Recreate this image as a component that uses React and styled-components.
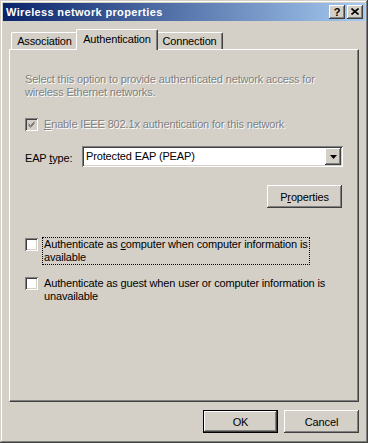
import React from "react";
import styled, { createGlobalStyle, css } from "styled-components";

const face = "#d4d0c8";
const shade = "#808080";
const dark = "#404040";

const raised = css`
  box-shadow: inset -1px -1px ${dark}, inset 1px 1px #fff, inset -2px -2px ${shade},
    inset 2px 2px ${face};
`;
const sunken = css`
  box-shadow: inset 1px 1px ${shade}, inset -1px -1px #fff, inset 2px 2px ${dark},
    inset -2px -2px ${face};
`;

const GlobalStyle = createGlobalStyle`
  html, body {
    margin: 0;
    padding: 0;
    background: ${face};
  }
  body {
    font-family: "Liberation Sans", Arial, sans-serif;
    font-size: 11px;
    letter-spacing: -0.15px;
    color: #000;
  }
`;

function App() {
  return (
    <>
      <GlobalStyle />
      <Window>
        <TitleBar>
          <TitleText>Wireless network properties</TitleText>
          <TitleButtons>
            <CaptionButton>?</CaptionButton>
            <CaptionButton>
              <svg width="8" height="7" viewBox="0 0 8 7">
                <path d="M0.5 0.5 L7.5 6.5 M7.5 0.5 L0.5 6.5" stroke="#000" strokeWidth="1.6" />
              </svg>
            </CaptionButton>
          </TitleButtons>
        </TitleBar>
        <Body>
          <TabStrip>
            <Tab $w={67}>Association</Tab>
            <Tab $w={78} $active>
              Authentication
            </Tab>
            <Tab $w={67}>Connection</Tab>
          </TabStrip>
          <Panel>
            <Description>
              Select this option to provide authenticated network access for
              <br />
              wireless Ethernet networks.
            </Description>
            <CheckRow $mt={18}>
              <CheckBox $disabled>
                <CheckMark color={shade} />
              </CheckBox>
              <CheckLabel $disabled>
                <u>E</u>nable IEEE 802.1x authentication for this network
              </CheckLabel>
            </CheckRow>
            <EapRow>
              <EapLabel>
                EAP <u>t</u>ype:
              </EapLabel>
              <Combo>
                <ComboText>Protected EAP (PEAP)</ComboText>
                <ComboButton>
                  <svg width="7" height="4" viewBox="0 0 7 4">
                    <polygon points="0,0 7,0 3.5,4" fill="#000" />
                  </svg>
                </ComboButton>
              </Combo>
            </EapRow>
            <PropsRow>
              <Button>
                P<u>r</u>operties
              </Button>
            </PropsRow>
            <CheckRow $mt={29}>
              <CheckBox />
              <CheckLabel $focus>
                Authenticate as <u>c</u>omputer when computer information is
                <br />
                available
              </CheckLabel>
            </CheckRow>
            <CheckRow $mt={11}>
              <CheckBox />
              <CheckLabel>
                Authenticate as <u>g</u>uest when user or computer information is
                <br />
                unavailable
              </CheckLabel>
            </CheckRow>
          </Panel>
          <Footer>
            <Button $default>OK</Button>
            <Button>Cancel</Button>
          </Footer>
        </Body>
      </Window>
    </>
  );
}

function CheckMark({ color }) {
  return (
    <svg width="7" height="7" viewBox="0 0 7 7">
      <path d="M0.5 2.5 L2.5 4.5 L6.5 0.5 M0.5 3.5 L2.5 5.5 L6.5 1.5 M0.5 4.5 L2.5 6.5 L6.5 2.5"
        stroke={color} strokeWidth="1" fill="none" />
    </svg>
  );
}

export default App;

const Window = styled.div`
  width: 368px;
  height: 443px;
  box-sizing: border-box;
  padding: 3px;
  background: ${face};
  box-shadow: inset -1px -1px ${dark}, inset 1px 1px ${face}, inset -2px -2px ${shade},
    inset 2px 2px #fff;
  display: flex;
  flex-direction: column;
`;

const TitleBar = styled.div`
  height: 18px;
  display: flex;
  align-items: center;
  justify-content: space-between;
  padding: 0 2px 0 3px;
  background: linear-gradient(to right, #0a246a, #a6caf0);
`;

const TitleText = styled.span`
  color: #fff;
  font-weight: bold;
  font-size: 11px;
  letter-spacing: 0.35px;
`;

const TitleButtons = styled.div`
  display: flex;
  gap: 2px;
`;

const CaptionButton = styled.div`
  width: 16px;
  height: 14px;
  background: ${face};
  ${raised};
  display: flex;
  align-items: center;
  justify-content: center;
  font-weight: bold;
  font-size: 11px;
  line-height: 14px;
  padding-bottom: 1px;
  box-sizing: border-box;
`;

const Body = styled.div`
  padding: 8px 6px 0;
  display: flex;
  flex-direction: column;
`;

const TabStrip = styled.div`
  height: 20px;
  display: flex;
  align-items: flex-end;
  padding-left: 2px;
`;

const Tab = styled.div`
  position: relative;
  box-sizing: border-box;
  width: ${(p) => p.$w}px;
  height: 17px;
  padding-top: 2px;
  text-align: center;
  line-height: 13px;
  background: ${face};
  border-top: 1px solid #fff;
  border-left: 1px solid #fff;
  border-right: 1px solid ${dark};
  border-top-left-radius: 2px;
  border-top-right-radius: 2px;
  box-shadow: inset -1px 0 ${shade};
  ${(p) =>
    p.$active &&
    css`
      z-index: 1;
      height: 21px;
      margin: 0 -2px -1px;
      width: ${p.$w + 4}px;
      padding-top: 3px;
    `}
`;

const Panel = styled.div`
  height: 353px;
  box-sizing: border-box;
  padding: 23px 15px 0 15px;
  border-top: 1px solid #fff;
  border-left: 1px solid #fff;
  border-right: 1px solid ${dark};
  border-bottom: 1px solid ${dark};
  box-shadow: inset -1px -1px ${shade};
  display: flex;
  flex-direction: column;
`;

const Description = styled.div`
  color: ${shade};
  text-shadow: 1px 1px 0 #fff;
  line-height: 13px;
`;

const CheckRow = styled.div`
  display: flex;
  align-items: flex-start;
  margin-top: ${(p) => p.$mt}px;
`;

const CheckBox = styled.div`
  width: 13px;
  height: 13px;
  flex: none;
  margin-top: 1px;
  margin-right: 4px;
  box-sizing: border-box;
  background: ${(p) => (p.$disabled ? face : "#fff")};
  ${sunken};
  display: flex;
  align-items: center;
  justify-content: center;
`;

const CheckLabel = styled.div`
  line-height: 13px;
  padding: 0 1px;
  border: 1px ${(p) => (p.$focus ? "dotted #000" : "solid transparent")};
  ${(p) =>
    p.$disabled &&
    css`
      color: ${shade};
      text-shadow: 1px 1px 0 #fff;
    `}
`;

const EapRow = styled.div`
  display: flex;
  align-items: center;
  margin-top: 14px;
`;

const EapLabel = styled.span`
  width: 57px;
  flex: none;
  padding-top: 2px;
`;

const Combo = styled.div`
  flex: 1;
  height: 21px;
  box-sizing: border-box;
  padding: 2px;
  background: #fff;
  ${sunken};
  display: flex;
  align-items: stretch;
`;

const ComboText = styled.div`
  flex: 1;
  padding-left: 2px;
  line-height: 17px;
`;

const ComboButton = styled.div`
  width: 16px;
  background: ${face};
  ${raised};
  display: flex;
  align-items: center;
  justify-content: center;
`;

const PropsRow = styled.div`
  display: flex;
  justify-content: flex-end;
  margin-top: 18px;
  padding-right: 1px;
`;

const Button = styled.div`
  width: 75px;
  height: 23px;
  box-sizing: border-box;
  background: ${face};
  display: flex;
  align-items: center;
  justify-content: center;
  ${(p) =>
    p.$default
      ? css`
          border: 1px solid #000;
          ${raised};
        `
      : raised};
`;

const Footer = styled.div`
  display: flex;
  justify-content: flex-end;
  gap: 6px;
  margin-top: 8px;
`;
